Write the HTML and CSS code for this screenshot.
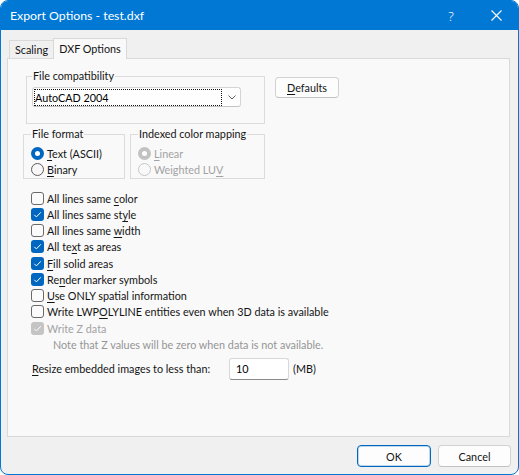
FILE: index.html
```html
<!DOCTYPE html>
<html>
<head>
<meta charset="utf-8">
<link rel="stylesheet" href="styles.css">
</head>
<body>
<div class="window">
  <div class="titlebar">
    <span class="title">Export Options - test.dxf</span>
    <span class="ctl help">?</span>
    <span class="ctl close"><svg width="11" height="11" viewBox="0 0 11 11"><path d="M0.5 0.5L10.5 10.5M10.5 0.5L0.5 10.5" stroke="#fff" stroke-width="1.1" fill="none"/></svg></span>
  </div>
  <div class="client">
    <div class="tabs">
      <div class="tab">Scaling</div>
      <div class="tab active">DXF Options</div>
    </div>
    <div class="panel">
      <div class="row1">
        <fieldset class="group compat">
          <legend>File compatibility</legend>
          <div class="combo">
            <div class="focus">AutoCAD 2004</div>
            <svg class="chev" width="8" height="5" viewBox="0 0 8 5"><path d="M0.5 0.5L4 4L7.5 0.5" stroke="#606060" stroke-width="1" fill="none"/></svg>
          </div>
        </fieldset>
        <button class="btn defaults"><u>D</u>efaults</button>
      </div>
      <div class="row2">
        <fieldset class="group format">
          <legend>File format</legend>
          <div class="opt"><span class="radio on"></span><span class="lbl"><u>T</u>ext (ASCII)</span></div>
          <div class="opt"><span class="radio"></span><span class="lbl"><u>B</u>inary</span></div>
        </fieldset>
        <fieldset class="group indexed">
          <legend>Indexed color mapping</legend>
          <div class="opt dis"><span class="radio on"></span><span class="lbl"><u>L</u>inear</span></div>
          <div class="opt dis"><span class="radio"></span><span class="lbl">Weighted LU<u>V</u></span></div>
        </fieldset>
      </div>
      <div class="checks">
        <div class="opt"><span class="box"></span><span class="lbl">All lines same <u>c</u>olor</span></div>
        <div class="opt"><span class="box on"><svg width="13" height="13" viewBox="0 0 13 13"><path d="M3.3 6.8L5.4 8.9L9.8 4.3" stroke="#fff" stroke-width="1" fill="none"/></svg></span><span class="lbl">All lines same st<u>y</u>le</span></div>
        <div class="opt"><span class="box"></span><span class="lbl">All lines same <u>w</u>idth</span></div>
        <div class="opt"><span class="box on"><svg width="13" height="13" viewBox="0 0 13 13"><path d="M3.3 6.8L5.4 8.9L9.8 4.3" stroke="#fff" stroke-width="1" fill="none"/></svg></span><span class="lbl">All te<u>x</u>t as areas</span></div>
        <div class="opt"><span class="box on"><svg width="13" height="13" viewBox="0 0 13 13"><path d="M3.3 6.8L5.4 8.9L9.8 4.3" stroke="#fff" stroke-width="1" fill="none"/></svg></span><span class="lbl"><u>F</u>ill solid areas</span></div>
        <div class="opt"><span class="box on"><svg width="13" height="13" viewBox="0 0 13 13"><path d="M3.3 6.8L5.4 8.9L9.8 4.3" stroke="#fff" stroke-width="1" fill="none"/></svg></span><span class="lbl">Re<u>n</u>der marker symbols</span></div>
        <div class="opt"><span class="box"></span><span class="lbl"><u>U</u>se ONLY spatial information</span></div>
        <div class="opt"><span class="box"></span><span class="lbl">Write LWP<u>O</u>LYLINE entities even when 3D data is available</span></div>
        <div class="opt dis"><span class="box on"><svg width="13" height="13" viewBox="0 0 13 13"><path d="M3.3 6.8L5.4 8.9L9.8 4.3" stroke="#fff" stroke-width="1" fill="none"/></svg></span><span class="lbl">Write Z data</span></div>
        <div class="note">Note that Z values will be zero when data is not available.</div>
      </div>
      <div class="resize">
        <span class="rlabel"><u>R</u>esize embedded images to less than:</span>
        <div class="input">10</div>
        <span class="unit">(MB)</span>
      </div>
    </div>
    <div class="footer">
      <button class="btn ok">OK</button>
      <button class="btn cancel">Cancel</button>
    </div>
  </div>
</div>
</body>
</html>
```

FILE: styles.css
```css
* { box-sizing: border-box; }
html, body { margin: 0; padding: 0; background: #ffffff; }
body {
  font-family: Lato, "Noto Sans", sans-serif;
  font-size: 10.8px;
  color: #141414;
}
u { text-decoration-thickness: 1px; text-underline-offset: 1.5px; }

.window {
  width: 519px;
  height: 475px;
  border: 1px solid #0078d4;
  border-radius: 8px;
  overflow: hidden;
  background: #f0f0f0;
  display: flex;
  flex-direction: column;
}

.titlebar {
  height: 29px;
  flex: none;
  background: #0078d4;
  color: #fff;
  display: flex;
  align-items: stretch;
}
.title {
  flex: 1;
  padding-left: 9px;
  font-size: 12.3px;
  display: flex;
  align-items: center;
}
.ctl {
  display: flex;
  align-items: center;
  justify-content: center;
}
.help { width: 46px; font-size: 13px; font-family: "Noto Sans", sans-serif; font-weight: 300; }
.close { width: 44px; }

.client {
  flex: 1;
  display: flex;
  flex-direction: column;
  padding: 8px 0 0 6px;
}

.tabs {
  height: 20px;
  display: flex;
  align-items: flex-end;
  padding-left: 2px;
  position: relative;
  z-index: 1;
}
.tab {
  height: 18px;
  border: 1px solid #d9d9d9;
  border-bottom: none;
  background: #f0f0f0;
  display: flex;
  align-items: center;
  justify-content: center;
}
.tab:first-child { width: 44px; border-right: none; }
.tab.active {
  width: 74px;
  height: 21px;
  margin-bottom: -1px;
  background: #f9f9f9;
  padding-bottom: 2px;
}

.panel {
  height: 379px;
  flex: none;
  margin-right: 8px;
  border: 1px solid #d9d9d9;
  background: #f9f9f9;
}

.row1 {
  display: flex;
  align-items: flex-start;
  margin-top: 10px;
  padding-left: 18px;
}
.group {
  margin: 0;
  border: 1px solid #dcdcdc;
  min-width: 0;
}
.group legend {
  line-height: 14px;
  padding: 0 1px;
  margin-left: 0;
}
.compat {
  width: 239px;
  padding: 4px 0 16px 5px;
}
.combo {
  width: 209px;
  height: 20px;
  border: 1px solid #d4d4d4;
  border-bottom-color: #c4c4c4;
  border-radius: 3px;
  background: #fefefe;
  display: flex;
  align-items: center;
  padding-left: 1px;
}
.focus {
  width: 188px;
  height: 17px;
  border: 1px dotted #111;
  display: flex;
  align-items: center;
  padding-left: 0;
  color: #000;
}
.chev { margin-left: 6px; }

.btn {
  font-family: inherit;
  font-size: 10.8px;
  color: #141414;
  background: #fdfdfd;
  border: 1px solid #d2d2d2;
  border-bottom-color: #c2c2c2;
  border-radius: 4px;
  padding: 0;
  margin: 0;
}
.defaults {
  width: 64px;
  height: 21px;
  margin-left: 10px;
  margin-top: 8px;
}

.row2 {
  display: flex;
  margin-top: 3px;
  padding-left: 15px;
}
.format {
  width: 102px;
  padding: 4px 0 1px 7px;
}
.indexed {
  width: 135px;
  margin-left: 5px;
  padding: 4px 0 1px 7px;
}

.opt {
  height: 16px;
  display: flex;
  align-items: center;
}
.opt .lbl { margin-left: 3px; white-space: nowrap; }
.opt.dis { color: #a2a2a2; }

.radio {
  width: 13px;
  height: 13px;
  border-radius: 50%;
  border: 1px solid #5c5c5c;
  background: #f7f7f7;
  display: flex;
  align-items: center;
  justify-content: center;
  flex: none;
}
.radio.on {
  border: none;
  background: #0067c0;
}
.radio.on::after {
  content: "";
  width: 5px;
  height: 5px;
  border-radius: 50%;
  background: #fff;
}
.dis .radio { border-color: #c6c6c6; background: #f9f9f9; }
.dis .radio.on { background: #c2c2c2; }

.checks {
  margin-top: 11px;
  padding-left: 23px;
}
.checks .opt { height: 16.25px; }
.box {
  width: 13px;
  height: 13px;
  flex: none;
  border: 1px solid #6a6a6a;
  border-radius: 3px;
  background: #fbfbfb;
  display: flex;
}
.box.on {
  border: none;
  background: #0067c0;
}
.dis .box.on { background: #c4c4c4; }
.note {
  height: 16.25px;
  display: flex;
  align-items: center;
  padding-left: 22px;
  color: #959595;
}

.resize {
  display: flex;
  align-items: center;
  margin-top: 5px;
  padding-left: 24px;
}
.rlabel { width: 197px; }
.input {
  width: 60px;
  height: 22px;
  background: #fff;
  border: 1px solid #d8d8d8;
  border-bottom-color: #8a8a8a;
  border-radius: 3px;
  display: flex;
  align-items: center;
  padding-left: 6px;
  color: #000;
}
.unit { margin-left: 4px; }

.footer {
  display: flex;
  justify-content: flex-end;
  gap: 7px;
  margin-top: 8px;
  padding-right: 7px;
}
.footer .btn { height: 22px; }
.ok {
  width: 74px;
  border: 1px solid #0067c0;
  box-shadow: inset 0 0 0 1px rgba(0, 103, 192, 0.25);
}
.cancel { width: 73px; }
```
